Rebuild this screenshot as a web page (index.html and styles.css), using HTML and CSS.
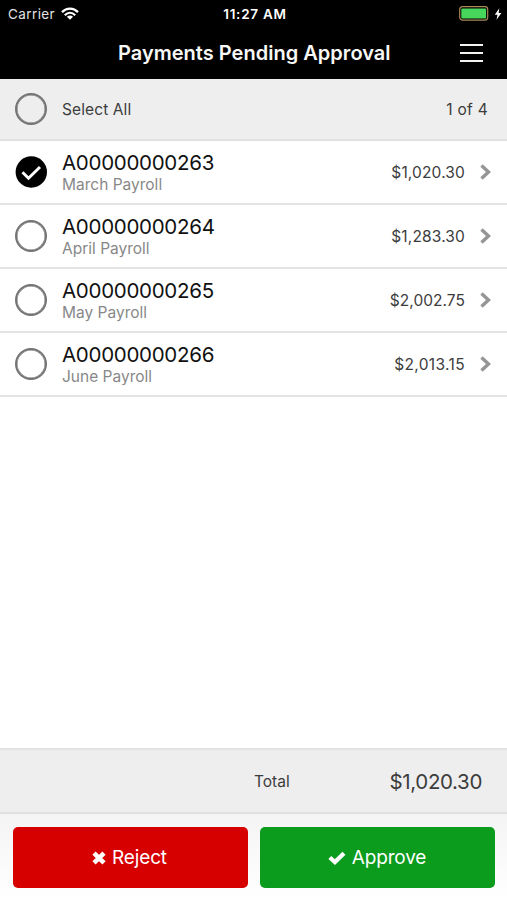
FILE: index.html
```html
<!DOCTYPE html>
<html lang="en">
<head>
<meta charset="utf-8">
<title>Payments Pending Approval</title>
<link rel="stylesheet" href="styles.css">
</head>
<body>
<div class="app">
  <header class="top">
    <div class="status">
      <div class="carrier"><span class="carrier-name">Carrier</span>
        <svg class="wifi" width="18" height="13" viewBox="0 0 18 13"><g fill="none" stroke="#fff" stroke-width="2.300"><path d="M1 5.100C5.500.5 12.500.5 17 5.100"/><path d="M3.800 8.200C7 5 11 5 14.200 8.200"/></g><path d="M9 12.800L5.900 9.700Q9 7.500 12.100 9.700Z" fill="#fff"/></svg>
      </div>
      <time class="clock">11:27 AM</time>
      <div class="power">
        <svg width="30" height="15" viewBox="0 0 30 15"><rect x=".7" y=".7" width="28" height="13.400" rx="2.800" fill="none" stroke="#a98a5a" stroke-width="1.200"/><rect x="2.300" y="2.400" width="24.800" height="10" rx="1" fill="#45d65b"/></svg>
        <svg width="8" height="12" viewBox="0 0 8 12"><path d="M5.300.3L.8 6.700H3.500L2.500 11.800L7.400 4.900H4.600Z" fill="#fff"/></svg>
      </div>
    </div>
    <div class="nav">
      <h1 class="title">Payments Pending Approval</h1>
      <button class="menu" aria-label="Menu"><i></i><i></i><i></i></button>
    </div>
  </header>
  <div class="select">
    <span class="radio"></span><span class="select-label">Select All</span><span class="count">1 of 4</span>
  </div>
  <main class="list">
    <div class="row">
      <svg class="checked" width="32" height="32" viewBox="0 0 32 32"><circle cx="16.300" cy="16" r="15.700"/><path d="M7.500 16.300L13.500 22.200L25 11" fill="none" stroke="#fff" stroke-width="3"/></svg>
      <div class="info"><div class="id">A00000000263</div><div class="desc">March Payroll</div></div>
      <span class="amount">$1,020.30</span>
      <svg class="chevron" width="11" height="16" viewBox="0 0 11 16"><path d="M1.500 1.500L8.500 8L1.500 14.500"/></svg>
    </div>
    <div class="row">
      <span class="radio"></span>
      <div class="info"><div class="id">A00000000264</div><div class="desc">April Payroll</div></div>
      <span class="amount">$1,283.30</span>
      <svg class="chevron" width="11" height="16" viewBox="0 0 11 16"><path d="M1.500 1.500L8.500 8L1.500 14.500"/></svg>
    </div>
    <div class="row">
      <span class="radio"></span>
      <div class="info"><div class="id">A00000000265</div><div class="desc">May Payroll</div></div>
      <span class="amount plain">$2,002.75</span>
      <svg class="chevron" width="11" height="16" viewBox="0 0 11 16"><path d="M1.500 1.500L8.500 8L1.500 14.500"/></svg>
    </div>
    <div class="row">
      <span class="radio"></span>
      <div class="info"><div class="id">A00000000266</div><div class="desc">June Payroll</div></div>
      <span class="amount wide">$2,013.15</span>
      <svg class="chevron" width="11" height="16" viewBox="0 0 11 16"><path d="M1.500 1.500L8.500 8L1.500 14.500"/></svg>
    </div>
  </main>
  <div class="total"><span class="total-label">Total</span><span class="total-value">$1,020.30</span></div>
  <footer class="actions">
    <button class="btn reject"><svg width="14" height="14" viewBox="0 0 14 14"><path d="M2 2.200L12 11.800M12 2.200L2 11.800" stroke="#fff" stroke-width="4.600"/></svg><span>Reject</span></button>
    <button class="btn approve"><svg width="18" height="14" viewBox="0 0 18 14"><path d="M1.800 6.500L6.900 11L16 2.300" fill="none" stroke="#fff" stroke-width="4.300"/></svg><span>Approve</span></button>
  </footer>
</div>
</body>
</html>
```

FILE: styles.css
```css
* { box-sizing: border-box; }
body { margin: 0; background: #fff; font-family: Inter, "Liberation Sans", sans-serif; color: #3c3c3c; }
button { border: 0; padding: 0; font: inherit; }
svg { display: block; flex: none; }
.app { height: 900px; display: flex; flex-direction: column; }
.top { height: 79px; background: #000; color: #fff; flex: none; }
.status { height: 27px; display: grid; grid-template-columns: 1fr auto 1fr; align-items: center; font-size: 13.500px; line-height: 16px; padding: 0 5px 0 8px; }
.carrier, .power { display: flex; align-items: center; }
.carrier { gap: 6px; color: #e2e2e2; letter-spacing: .4px; }
.clock { font-weight: 600; letter-spacing: .75px; }
.power { justify-content: flex-end; gap: 5px; }
.nav { height: 52px; display: flex; align-items: center; padding: 0 24px 0 118px; justify-content: space-between; }
.title { margin: 0; font-size: 20px; line-height: 24px; font-weight: 600; letter-spacing: .02px; white-space: nowrap; color: #f8f8f6; }
.menu { width: 23px; height: 18px; margin-top: -1px; background: none; display: flex; flex-direction: column; justify-content: space-between; }
.menu i { height: 2px; width: 23px; background: #f2f2ee; }
.select { height: 62px; flex: none; display: flex; align-items: center; background: #eee; border-bottom: 2px solid #e0e0e0; padding: 0 19px 0 15px; font-size: 15.500px; letter-spacing: .1px; }
.radio { width: 32px; height: 32px; flex: none; border: 2px solid #747474; border-radius: 50%; box-shadow: inset 0 0 0 .5px #747474; }
.select-label { margin-left: 15px; }
.count { margin-left: auto; letter-spacing: .3px; }
.list { flex: 1; }
.row { height: 64px; display: flex; align-items: center; border-bottom: 2px solid #e3e3e3; padding: 0 16px 0 15px; }
.info { margin-left: 15px; flex: 1; }
.id { font-size: 20.500px; line-height: 24px; letter-spacing: -.29px; color: #111; white-space: nowrap; }
.desc { font-size: 15.500px; line-height: 19px; color: #888; }
.amount { font-size: 15.500px; letter-spacing: .15px; margin-right: 15px; }
.amount.plain { letter-spacing: .05px; }
.amount.wide { letter-spacing: .35px; }
.chevron { fill: none; stroke: #969696; stroke-width: 3.500; }
.total { height: 66px; flex: none; display: flex; align-items: center; background: #eee; border-top: 2px solid #e3e3e3; border-bottom: 2px solid #e0e0e0; padding: 0 25px 0 254px; justify-content: space-between; }
.total-label { font-size: 15.500px; }
.total-value { font-size: 20.500px; letter-spacing: -.35px; }
.actions { height: 86px; flex: none; display: grid; grid-template-columns: 1fr 1fr; gap: 12px; padding: 13px 12px 12px 13px; background: linear-gradient(#f4f4f4, #fff); }
.btn { height: 61px; border-radius: 5px; display: flex; align-items: center; justify-content: center; color: #fff; font-size: 19px; gap: 6px; letter-spacing: -.15px; }
.reject { background: #d70000; padding-right: 2px; }
.approve { background: #0b9b1d; padding-right: 1px; }
```
